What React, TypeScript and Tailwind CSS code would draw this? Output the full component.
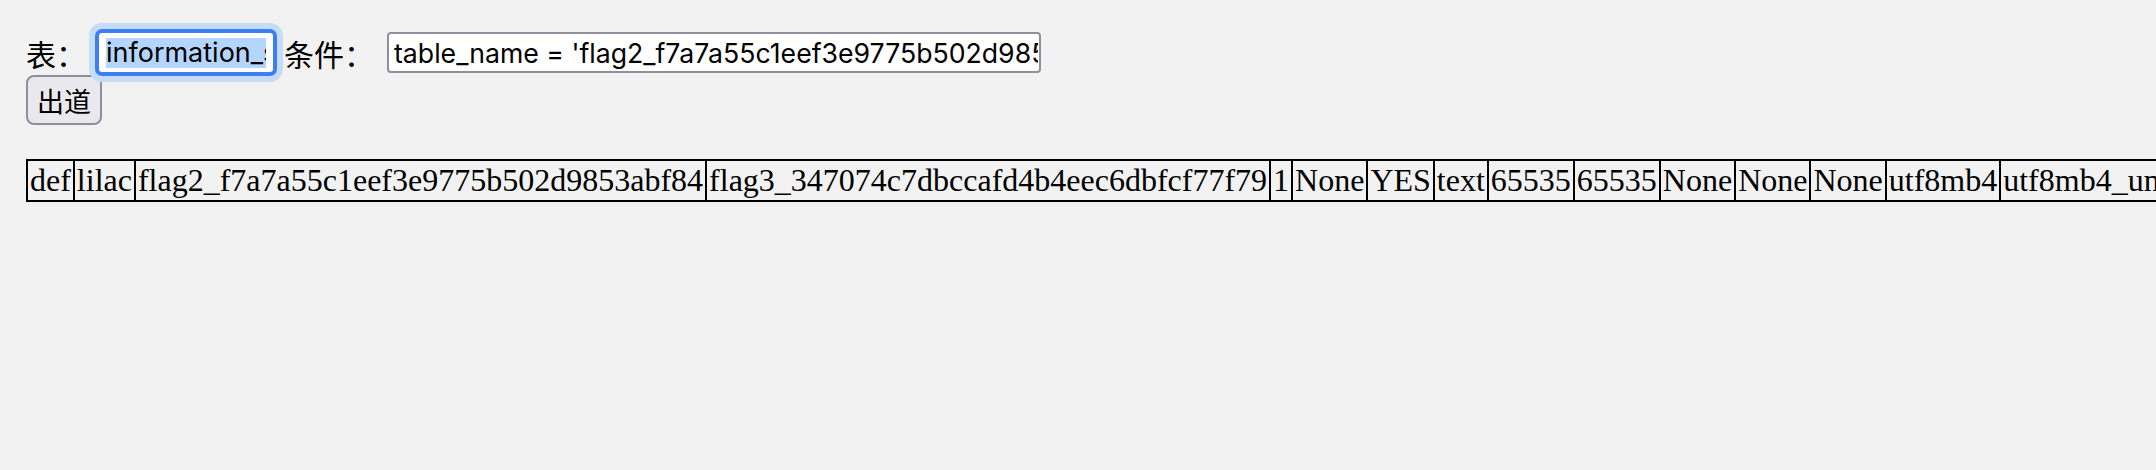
const cells = [
    "def",
    "lilac",
    "flag2_f7a7a55c1eef3e9775b502d9853abf84",
    "flag3_347074c7dbccafd4b4eec6dbfcf77f79",
    "1",
    "None",
    "YES",
    "text",
    "65535",
    "65535",
    "None",
    "None",
    "None",
    "utf8mb4",
    "utf8mb4_unicode_ci",
    "text",
    "",
    "",
    "select,insert,update,references",
    "",
    "",
    "None",
]

export default function App() {
    return (
        <div className="min-h-screen w-full overflow-hidden bg-[#f1f2f1] pl-[26px] pt-[29px] text-black">
            <div className="flex h-[47px] items-center">
                <span className="font-['Noto_Sans_CJK_SC',sans-serif] text-[30px] leading-none">
                    表：
                </span>
                <div className="ml-[9px] flex h-[47px] w-[182px] items-center rounded-[7px] border-4 border-[#3d7ef6] bg-white px-[7px] shadow-[0_0_0_6px_#c4dcf6]">
                    <div className="flex-1 overflow-hidden">
                        <span className="whitespace-nowrap bg-[#b4d5fe] font-['Inter',sans-serif] text-[27px] leading-[30px]">
                            information_schema.columns
                        </span>
                    </div>
                </div>
                <span className="ml-[7px] font-['Noto_Sans_CJK_SC',sans-serif] text-[30px] leading-none">
                    条件：
                </span>
                <input
                    readOnly
                    value="table_name = 'flag2_f7a7a55c1eef3e9775b502d9853abf84'"
                    className="ml-[13px] h-[41px] w-[654px] rounded-[4px] border-2 border-[#8f8f9d] bg-white pl-[5px] pr-px font-['Inter',sans-serif] text-[26.67px] text-black outline-none"
                />
            </div>

            <button className="mt-[-1px] flex h-[50px] w-[76px] items-center justify-center rounded-[8px] border-2 border-[#8f8f9d] bg-[#e9e9ed] font-['Noto_Sans_CJK_SC',sans-serif] text-[27px] leading-none">
                出道
            </button>

            <table className="mt-[34px] border-collapse whitespace-nowrap border-2 border-black font-['Liberation_Serif',serif] text-[32px]">
                <tbody>
                    <tr>
                        {cells.map((cell, i) => (
                            <td
                                key={i}
                                className="border-2 border-black px-[2px] py-px leading-[37px]"
                            >
                                {cell}
                            </td>
                        ))}
                    </tr>
                </tbody>
            </table>
        </div>
    )
}
